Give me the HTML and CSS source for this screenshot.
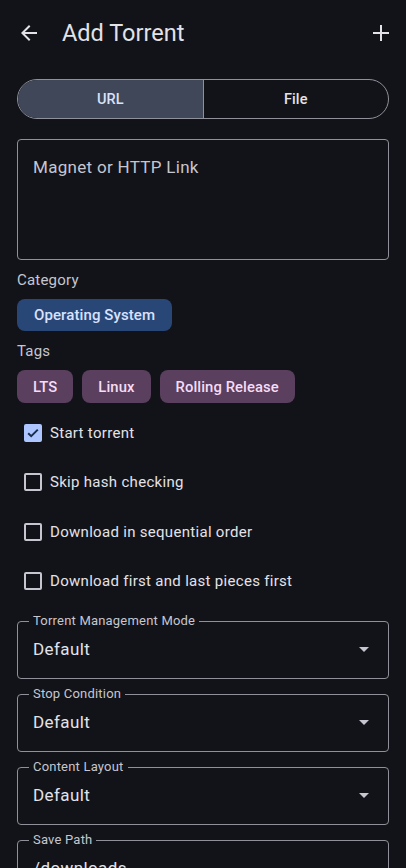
FILE: index.html
```html
<!DOCTYPE html>
<html lang="en">
<head>
<meta charset="utf-8">
<title>Add Torrent</title>
<link rel="stylesheet" href="styles.css">
</head>
<body>
<header class="topbar">
  <button class="icon-btn" aria-label="Back">
    <svg viewBox="0 0 24 24" width="24" height="24"><path d="M20 11H7.83l5.59-5.59L12 4l-8 8 8 8 1.41-1.41L7.83 13H20v-2z" fill="currentColor"/></svg>
  </button>
  <h1 class="title">Add Torrent</h1>
  <button class="icon-btn add" aria-label="Add">
    <svg viewBox="0 0 24 24" width="24" height="24"><path d="M12 4v16M4 12h16" fill="none" stroke="currentColor" stroke-width="2"/></svg>
  </button>
</header>

<main class="content">
  <div class="segmented">
    <button class="seg selected">URL</button>
    <button class="seg">File</button>
  </div>

  <div class="textarea">Magnet or HTTP Link</div>

  <div class="section-label">Category</div>
  <div class="chips">
    <span class="chip chip-blue">Operating System</span>
  </div>

  <div class="section-label">Tags</div>
  <div class="chips">
    <span class="chip chip-purple">LTS</span>
    <span class="chip chip-purple">Linux</span>
    <span class="chip chip-purple">Rolling Release</span>
  </div>

  <div class="checks">
    <label class="check-row">
      <span class="box checked">
        <svg viewBox="0 0 18 18" width="18" height="18"><path d="M4.2 9.2l3 3 6.6-6.6" fill="none" stroke="#1b2d4d" stroke-width="2"/></svg>
      </span>
      <span class="check-label">Start torrent</span>
    </label>
    <label class="check-row">
      <span class="box"></span>
      <span class="check-label">Skip hash checking</span>
    </label>
    <label class="check-row">
      <span class="box"></span>
      <span class="check-label">Download in sequential order</span>
    </label>
    <label class="check-row">
      <span class="box"></span>
      <span class="check-label">Download first and last pieces first</span>
    </label>
  </div>

  <fieldset class="field">
    <legend>Torrent Management Mode</legend>
    <div class="field-row"><span class="value">Default</span><svg class="drop" viewBox="0 0 10 5" width="10" height="5"><path d="M0 0l5 5 5-5z" fill="currentColor"/></svg></div>
  </fieldset>
  <fieldset class="field">
    <legend>Stop Condition</legend>
    <div class="field-row"><span class="value">Default</span><svg class="drop" viewBox="0 0 10 5" width="10" height="5"><path d="M0 0l5 5 5-5z" fill="currentColor"/></svg></div>
  </fieldset>
  <fieldset class="field">
    <legend>Content Layout</legend>
    <div class="field-row"><span class="value">Default</span><svg class="drop" viewBox="0 0 10 5" width="10" height="5"><path d="M0 0l5 5 5-5z" fill="currentColor"/></svg></div>
  </fieldset>
  <fieldset class="field">
    <legend>Save Path</legend>
    <div class="field-row"><span class="value">/downloads</span></div>
  </fieldset>
</main>
</body>
</html>
```
FILE: styles.css
```css
* { box-sizing: border-box; }
html, body {
  margin: 0;
  background: #121318;
  color: #e3e2e9;
  font-family: Roboto, "Noto Sans", "Liberation Sans", sans-serif;
}
body { overflow: hidden; height: 868px; }

.topbar {
  height: 66px;
  display: flex;
  align-items: center;
  padding: 0 17px;
}
.icon-btn {
  background: none;
  border: 0;
  padding: 0;
  width: 24px;
  height: 24px;
  color: #e3e2e9;
  display: flex;
}
.icon-btn.add { margin-right: -4px; }
.title {
  margin: 0 0 0 21px;
  font-size: 23.5px;
  font-weight: 400;
  flex: 1;
  letter-spacing: 0;
}

.content { padding: 0 17px; }

.segmented {
  margin-top: 13px;
  height: 40px;
  display: flex;
  border: 1px solid #8f9099;
  border-radius: 20px;
  overflow: hidden;
}
.seg {
  flex: 1;
  border: 0;
  background: transparent;
  color: #e3e2e9;
  font-family: inherit;
  font-size: 14.5px;
  font-weight: 500;
  letter-spacing: 0.1px;
}
.seg.selected {
  background: #3f4759;
  color: #dae2f9;
  border-right: 1px solid #8f9099;
}

.textarea {
  margin-top: 20px;
  height: 121px;
  border: 1px solid #8f9099;
  border-radius: 4px;
  padding: 15px 15px;
  font-size: 17px;
  line-height: 24px;
  color: #c5c6d0;
  letter-spacing: 0.3px;
}

.section-label {
  margin-top: 10px;
  font-size: 15px;
  line-height: 20px;
  color: #c5c6d0;
  letter-spacing: 0.2px;
}
.chips {
  margin-top: 9px;
  display: flex;
  gap: 9px;
}
.chip {
  height: 32px;
  padding: 0 16px;
  border-radius: 8px;
  display: flex;
  align-items: center;
  font-size: 15px;
  font-weight: 500;
  letter-spacing: 0.1px;
}
.chip-blue { background: #284777; color: #d8e2ff; padding: 0 17px; }
.chip-purple { background: #5a3f5e; color: #f5dcf7; height: 33px; padding: 0 16px; font-size: 14.8px; }

.checks { margin-top: 5px; }
.check-row {
  height: 49.5px;
  display: flex;
  align-items: center;
  padding-left: 7px;
  gap: 8px;
}
.box {
  width: 18px;
  height: 18px;
  border: 2px solid #c5c6d0;
  border-radius: 2px;
  display: flex;
}
.box.checked {
  background: #aec6ff;
  border-color: #aec6ff;
}
.box.checked svg { margin: -2px; }
.check-label {
  font-size: 15px;
  line-height: 20px;
  color: #e3e2e9;
  letter-spacing: 0.3px;
}

.field {
  margin: 7px 0 0;
  padding: 0 16px 17px 15px;
  border: 1px solid #8f9099;
  border-radius: 4px;
  min-width: 0;
}
.checks + .field { margin-top: 7px; }
.field legend {
  padding: 0 4px;
  margin-left: -4px;
  font-size: 13px;
  line-height: 16px;
  color: #c5c6d0;
  letter-spacing: 0.2px;
}
.field-row {
  margin-top: 8px;
  height: 24px;
  display: flex;
  align-items: center;
  justify-content: space-between;
}
.value {
  font-size: 17px;
  line-height: 24px;
  color: #e3e2e9;
  letter-spacing: 0.4px;
}
.drop { color: #c5c6d0; margin-right: 3px; }
```
